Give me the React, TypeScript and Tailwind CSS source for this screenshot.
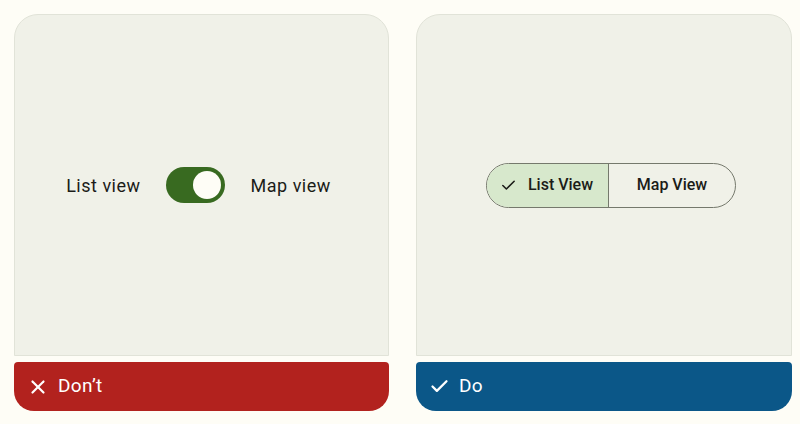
import { Check, X } from "lucide-react";

function Panel({ good, children }: { good: boolean; children: React.ReactNode }) {
  return (
    <div className={`flex flex-col ${good ? "w-[376px]" : "w-[375px]"}`}>
      <div className="h-[342px] rounded-t-[24px] border border-[#e1e3d8] bg-[#f0f1e8] flex items-center justify-center">
        {children}
      </div>
      <div
        className={`mt-[6px] h-[49px] rounded-t-[4px] rounded-b-[20px] flex items-center gap-[9px] pl-[13px] text-white text-[19px] tracking-[0.3px] ${
          good ? "bg-[#0b5788]" : "bg-[#b2221e]"
        }`}
      >
        {good ? (
          <Check className="w-[21px] h-[21px]" strokeWidth={2.6} />
        ) : (
          <X className="w-[22px] h-[22px]" strokeWidth={2.4} />
        )}
        <span>{good ? "Do" : "Don’t"}</span>
      </div>
    </div>
  );
}

export default function App() {
  return (
    <div
      className="w-[800px] h-[424px] bg-[#fefdf6] flex gap-[27px] pl-[14px] pt-[14px]"
      style={{ fontFamily: "Roboto, 'Noto Sans', sans-serif" }}
    >
      <Panel good={false}>
        <div className="mr-[6px] flex items-center text-[18px] text-[#1b1c18] tracking-[0.5px]">
          <span>List view</span>
          <div className="ml-[25px] mr-[26px] w-[59px] h-[36px] rounded-full bg-[#386a20] flex items-center justify-end pr-[4px]">
            <div className="w-[28px] h-[28px] rounded-full bg-[#fefdf6]" />
          </div>
          <span>Map view</span>
        </div>
      </Panel>
      <Panel good>
        <div className="ml-[14px] flex w-[250px] h-[45px] rounded-full border border-[#75796c] overflow-hidden text-[16px] font-medium text-[#1b1c18]">
          <div className="w-[122px] bg-[#d7e8cc] border-r border-[#75796c] flex items-center justify-center gap-[11px] pr-[2px]">
            <Check className="w-[17px] h-[17px]" strokeWidth={2.2} />
            <span>List View</span>
          </div>
          <div className="flex-1 flex items-center justify-center">Map View</div>
        </div>
      </Panel>
    </div>
  );
}
